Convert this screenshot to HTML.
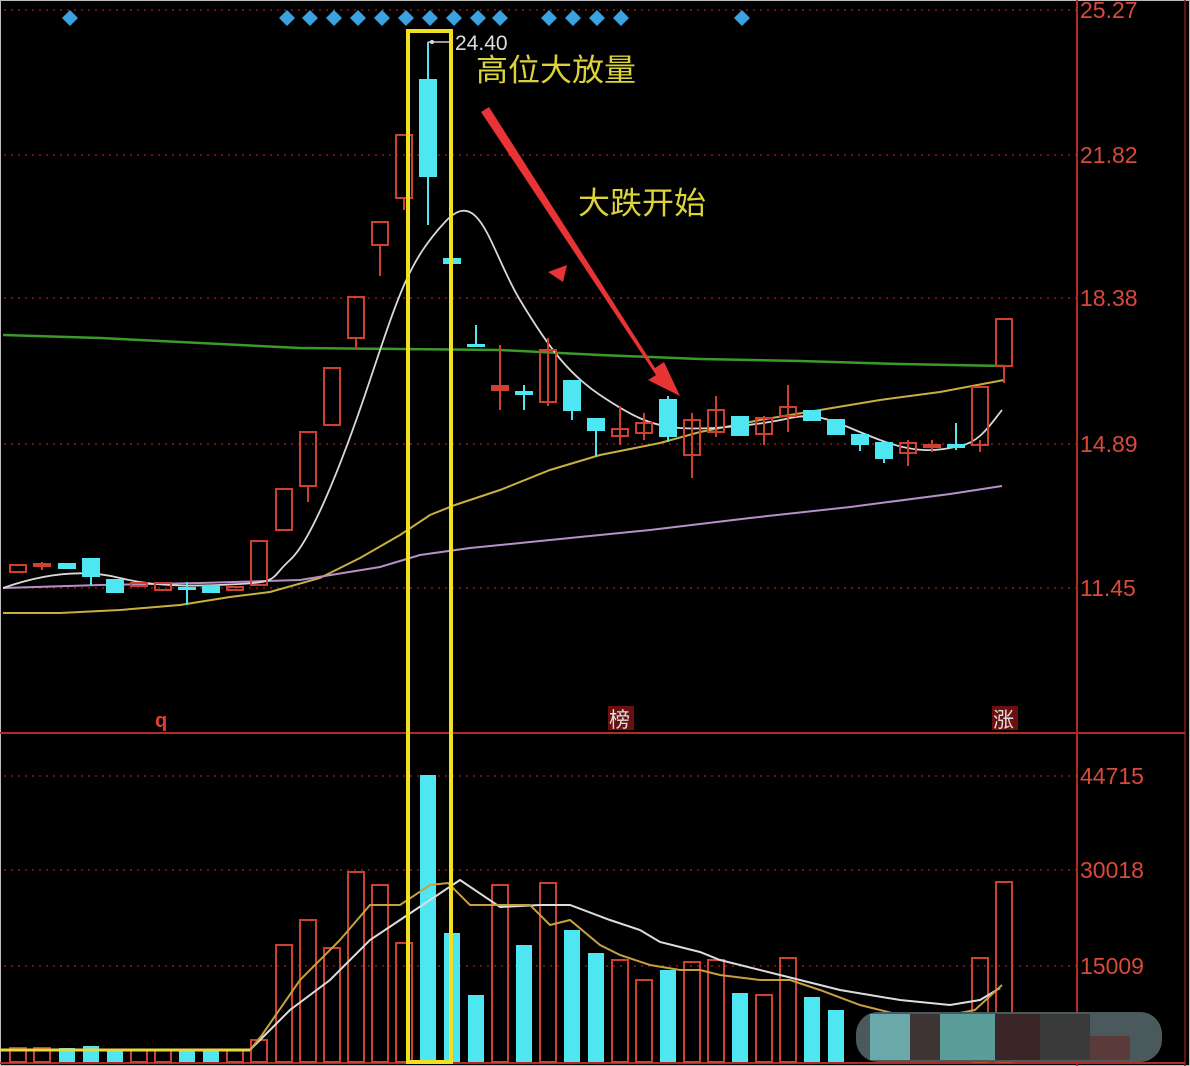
<!DOCTYPE html>
<html><head><meta charset="utf-8"><style>
html,body{margin:0;padding:0;background:#000;}
svg{display:block}
text{font-family:"Liberation Sans","Noto Sans CJK SC",sans-serif}
</style></head><body>
<svg width="1190" height="1066" viewBox="0 0 1190 1066" xmlns="http://www.w3.org/2000/svg">
<rect width="1190" height="1066" fill="#000"/>
<rect x="0.5" y="0.5" width="1189" height="1065" fill="none" stroke="#bbb" stroke-width="1"/>
<g stroke="#8a1c18" stroke-width="1.5" stroke-dasharray="2,5">
<line x1="4" y1="10" x2="1076" y2="10"/>
<line x1="4" y1="155" x2="1076" y2="155"/>
<line x1="4" y1="298" x2="1076" y2="298"/>
<line x1="4" y1="444" x2="1076" y2="444"/>
<line x1="4" y1="588" x2="1076" y2="588"/>
<line x1="4" y1="776" x2="1076" y2="776"/>
<line x1="4" y1="870" x2="1076" y2="870"/>
<line x1="4" y1="966" x2="1076" y2="966"/>
</g>
<line x1="1077" y1="0" x2="1077" y2="1066" stroke="#b32a22" stroke-width="2"/>
<line x1="1185" y1="0" x2="1185" y2="1066" stroke="#7a1a16" stroke-width="1.5"/>
<line x1="0" y1="733" x2="1185" y2="733" stroke="#b32a22" stroke-width="2"/>
<line x1="0" y1="1063" x2="1185" y2="1063" stroke="#b32a22" stroke-width="2"/>
<g fill="#d84a3c" font-size="23">
<text x="1080" y="18">25.27</text>
<text x="1080" y="163">21.82</text>
<text x="1080" y="306">18.38</text>
<text x="1080" y="452">14.89</text>
<text x="1080" y="596">11.45</text>
<text x="1080" y="784">44715</text>
<text x="1080" y="878">30018</text>
<text x="1080" y="974">15009</text>
</g>
<g fill="#3aa2e0">
<path d="M70 10l8 8-8 8-8-8z"/>
<path d="M287 10l8 8-8 8-8-8z"/><path d="M310 10l8 8-8 8-8-8z"/><path d="M334 10l8 8-8 8-8-8z"/>
<path d="M358 10l8 8-8 8-8-8z"/><path d="M382 10l8 8-8 8-8-8z"/><path d="M406 10l8 8-8 8-8-8z"/>
<path d="M430 10l8 8-8 8-8-8z"/><path d="M454 10l8 8-8 8-8-8z"/><path d="M478 10l8 8-8 8-8-8z"/>
<path d="M500 10l8 8-8 8-8-8z"/><path d="M549 10l8 8-8 8-8-8z"/><path d="M573 10l8 8-8 8-8-8z"/>
<path d="M597 10l8 8-8 8-8-8z"/><path d="M621 10l8 8-8 8-8-8z"/><path d="M742 10l8 8-8 8-8-8z"/>
</g>
<polyline fill="none" stroke="#3a9a2a" stroke-width="2.5" points="3,335 100,338 200,343 300,348 400,349 500,350 600,355 700,359 800,361 900,364 1004,366"/>
<polyline fill="none" stroke="#c8b040" stroke-width="2" points="3,613 60,613 120,610 180,605 230,597 270,592 320,578 360,558 400,535 430,515 455,505 500,490 550,470 600,455 660,443 700,432 760,420 820,410 880,400 940,392 1004,380"/>
<polyline fill="none" stroke="#b890c8" stroke-width="2" points="3,588 100,585 200,583 300,580 380,567 420,555 470,548 550,540 650,530 750,518 850,507 950,494 1002,486"/>
<path fill="none" stroke="#d8d8d8" stroke-width="1.8" d="M3,588 C40,575 80,568 120,578 S200,586 240,584 S270,578 290,560 S340,470 370,380 S410,260 445,222 S490,250 520,300 S570,375 600,395 S650,426 680,428 S760,425 790,418 S840,425 880,440 S940,450 960,446 S990,425 1002,410"/>
<g stroke="#d0402e" stroke-width="2" fill="none">
<rect x="10" y="565" width="16" height="7"/>
<line x1="42" y1="562" x2="42" y2="570"/><rect x="34" y="564" width="16" height="2"/>
<rect x="131" y="583" width="16" height="3"/>
<rect x="155" y="583" width="16" height="7"/>
<rect x="227" y="587" width="16" height="3"/>
<rect x="251" y="541" width="16" height="44"/>
<rect x="276" y="489" width="16" height="41"/>
<line x1="308" y1="486" x2="308" y2="502"/><rect x="300" y="432" width="16" height="54"/>
<rect x="324" y="368" width="16" height="57"/>
<line x1="356" y1="338" x2="356" y2="349"/><rect x="348" y="297" width="16" height="41"/>
<line x1="380" y1="245" x2="380" y2="276"/><rect x="372" y="222" width="16" height="23"/>
<line x1="404" y1="198" x2="404" y2="210"/><rect x="396" y="135" width="16" height="63"/>
<line x1="500" y1="345" x2="500" y2="410"/><rect x="492" y="386" width="16" height="4" fill="#d0402e"/>
<line x1="548" y1="338" x2="548" y2="406"/><rect x="540" y="350" width="16" height="52"/>
<line x1="620" y1="406" x2="620" y2="445"/><rect x="612" y="429" width="16" height="7"/>
<line x1="644" y1="413" x2="644" y2="440"/><rect x="636" y="423" width="16" height="10"/>
<line x1="692" y1="413" x2="692" y2="478"/><rect x="684" y="420" width="16" height="35"/>
<line x1="716" y1="396" x2="716" y2="437"/><rect x="708" y="410" width="16" height="22"/>
<line x1="764" y1="416" x2="764" y2="445"/><rect x="756" y="418" width="16" height="16"/>
<line x1="788" y1="385" x2="788" y2="432"/><rect x="780" y="407" width="16" height="9"/>
<line x1="908" y1="440" x2="908" y2="466"/><rect x="900" y="443" width="16" height="10"/>
<line x1="932" y1="440" x2="932" y2="452"/><rect x="924" y="445" width="16" height="2"/>
<line x1="980" y1="440" x2="980" y2="452"/><rect x="972" y="387" width="16" height="58"/>
<line x1="1004" y1="366" x2="1004" y2="383"/><rect x="996" y="319" width="16" height="47"/>
</g>
<g fill="#4ee6f0" stroke="#4ee6f0" stroke-width="2">
<rect x="59" y="564" width="16" height="4"/>
<line x1="91" y1="576" x2="91" y2="585"/><rect x="83" y="559" width="16" height="17"/>
<rect x="107" y="580" width="16" height="12"/>
<line x1="187" y1="582" x2="187" y2="605"/><rect x="179" y="588" width="16" height="1"/>
<rect x="203" y="586" width="16" height="6"/>
<line x1="428" y1="42" x2="428" y2="225"/><rect x="420" y="80" width="16" height="96"/>
<rect x="444" y="259" width="16" height="4"/>
<line x1="476" y1="325" x2="476" y2="346"/><rect x="468" y="345" width="16" height="1"/>
<line x1="524" y1="385" x2="524" y2="410"/><rect x="516" y="392" width="16" height="2"/>
<line x1="572" y1="410" x2="572" y2="420"/><rect x="564" y="381" width="16" height="29"/>
<line x1="596" y1="430" x2="596" y2="456"/><rect x="588" y="419" width="16" height="11"/>
<line x1="668" y1="396" x2="668" y2="442"/><rect x="660" y="400" width="16" height="36"/>
<rect x="732" y="417" width="16" height="18"/>
<rect x="804" y="411" width="16" height="9"/>
<rect x="828" y="420" width="16" height="14"/>
<line x1="860" y1="444" x2="860" y2="451"/><rect x="852" y="435" width="16" height="9"/>
<line x1="884" y1="458" x2="884" y2="463"/><rect x="876" y="443" width="16" height="15"/>
<line x1="956" y1="423" x2="956" y2="450"/><rect x="948" y="445" width="16" height="2"/>
</g>
<line x1="428" y1="42" x2="452" y2="42" stroke="#ccc" stroke-width="1.5"/>
<circle cx="432" cy="42" r="2" fill="#ddd"/>
<text x="455" y="50" fill="#ddd" font-size="21">24.40</text>
<text x="476" y="81" fill="#dcd23a" font-size="31" textLength="160" lengthAdjust="spacingAndGlyphs">高位大放量</text>
<text x="578" y="214" fill="#dcd23a" font-size="31" textLength="128" lengthAdjust="spacingAndGlyphs">大跌开始</text>
<polygon points="481,112 489,107 655,368 664,362 680,396 648,380 656,375" fill="#e83434"/>
<polygon points="548,272 567,265 563,282" fill="#e83434"/>
<text x="155" y="727" fill="#e04030" font-size="20" font-weight="bold">q</text>
<rect x="608" y="706" width="26" height="24" fill="#6a1010"/>
<text x="609" y="727" fill="#ddd" font-size="21">榜</text>
<rect x="992" y="706" width="26" height="24" fill="#6a1010"/>
<text x="993" y="727" fill="#ddd" font-size="21">涨</text>
<g stroke="#d0402e" stroke-width="2" fill="none">
<rect x="10" y="1048" width="16" height="14"/><rect x="34" y="1048" width="16" height="14"/>
<rect x="131" y="1050" width="16" height="12"/><rect x="155" y="1050" width="16" height="12"/>
<rect x="227" y="1050" width="16" height="12"/><rect x="251" y="1040" width="16" height="22"/>
<rect x="276" y="945" width="16" height="117"/><rect x="300" y="920" width="16" height="142"/>
<rect x="324" y="948" width="16" height="114"/><rect x="348" y="872" width="16" height="190"/>
<rect x="372" y="885" width="16" height="177"/><rect x="396" y="943" width="16" height="119"/>
<rect x="492" y="885" width="16" height="177"/><rect x="540" y="883" width="16" height="179"/>
<rect x="612" y="960" width="16" height="102"/><rect x="636" y="980" width="16" height="82"/>
<rect x="684" y="962" width="16" height="100"/><rect x="708" y="960" width="16" height="102"/>
<rect x="756" y="995" width="16" height="67"/><rect x="780" y="958" width="16" height="104"/>
<rect x="972" y="958" width="16" height="104"/><rect x="996" y="882" width="16" height="180"/>
</g>
<g fill="#4ee6f0">
<rect x="59" y="1048" width="16" height="14"/><rect x="83" y="1046" width="16" height="16"/>
<rect x="107" y="1050" width="16" height="12"/><rect x="179" y="1050" width="16" height="12"/>
<rect x="203" y="1050" width="16" height="12"/>
<rect x="420" y="775" width="16" height="287"/><rect x="444" y="933" width="16" height="129"/>
<rect x="468" y="995" width="16" height="67"/><rect x="516" y="945" width="16" height="117"/>
<rect x="564" y="930" width="16" height="132"/><rect x="588" y="953" width="16" height="109"/>
<rect x="660" y="970" width="16" height="92"/><rect x="732" y="993" width="16" height="69"/>
<rect x="804" y="997" width="16" height="65"/><rect x="828" y="1010" width="16" height="52"/>
<rect x="948" y="1012" width="16" height="50"/>
</g>
<polyline fill="none" stroke="#ddd" stroke-width="2" points="0,1050 250,1050 260,1040 290,1010 330,980 370,940 400,920 430,900 460,880 500,907 540,905 570,905 610,920 640,930 660,942 700,952 720,960 780,975 840,990 900,1000 950,1005 980,1000 1000,988"/>
<polyline fill="none" stroke="#c8a040" stroke-width="2" points="0,1050 250,1050 262,1035 300,980 340,940 370,905 400,905 430,885 448,883 470,905 500,905 530,905 550,925 570,920 600,945 620,955 650,965 680,970 700,970 720,975 760,980 790,980 820,990 860,1005 900,1015 950,1015 975,1010 1002,985"/>
<polyline fill="none" stroke="#e8d840" stroke-width="3" points="0,1050 250,1050"/>
<rect x="408" y="31" width="43" height="1031" fill="none" stroke="#f0e020" stroke-width="4"/>
<rect x="856" y="1012" width="306" height="50" rx="22" fill="#4a5a5c"/>
<rect x="870" y="1014" width="40" height="46" fill="#6aa8aa"/>
<rect x="910" y="1014" width="30" height="46" fill="#3e3434"/>
<rect x="940" y="1014" width="55" height="46" fill="#5a9c98"/>
<rect x="995" y="1014" width="45" height="46" fill="#3a2626"/>
<rect x="1040" y="1014" width="50" height="46" fill="#3a3a3a"/>
<rect x="1090" y="1036" width="40" height="24" fill="#5a3a3a"/>
</svg>
</body></html>
